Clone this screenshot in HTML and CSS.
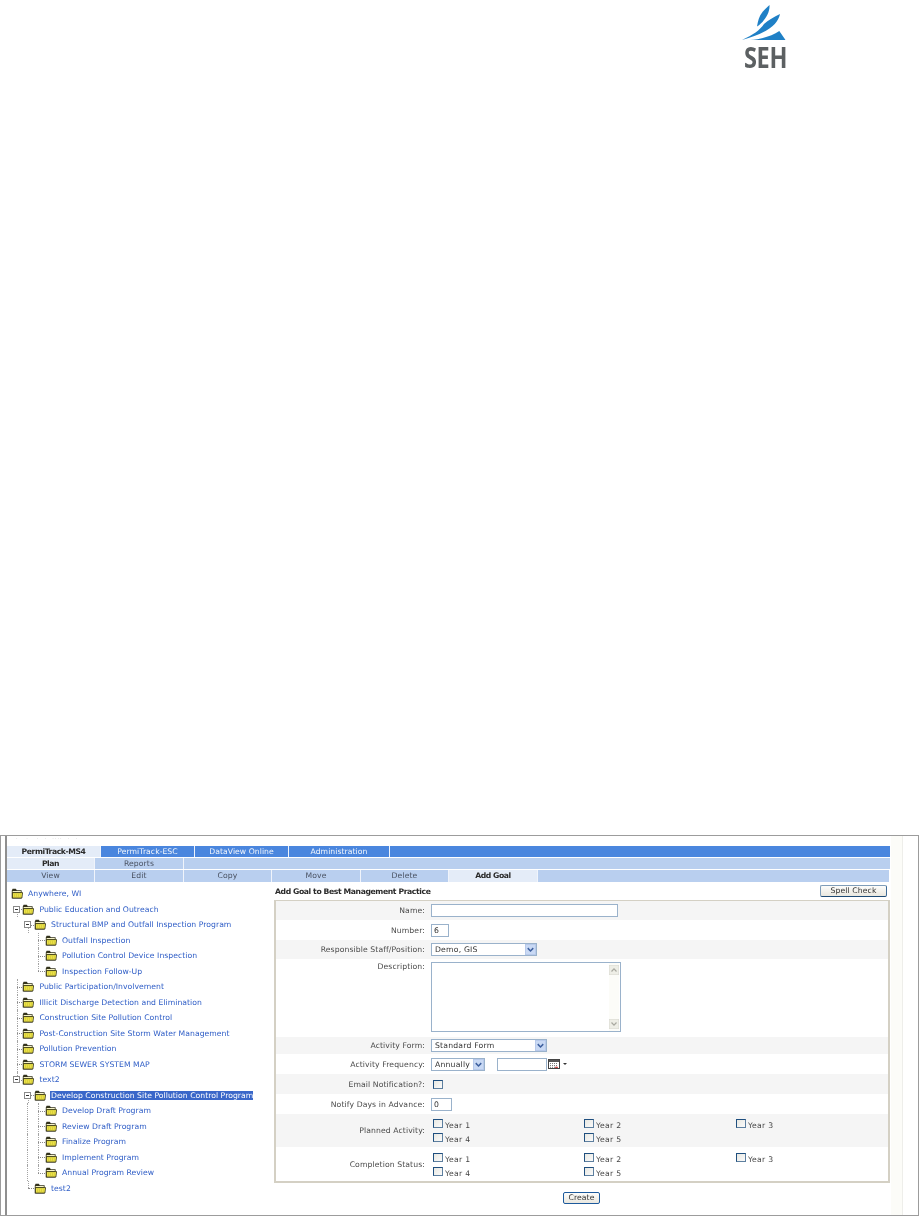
FILE: index.html
```html
<!DOCTYPE html>
<html lang="en">
<head>
<meta charset="utf-8">
<title>PermiTrack-MS4</title>
<link rel="stylesheet" href="styles.css">
</head>
<body>
<svg class="defs" width="0" height="0" aria-hidden="true">
  <symbol id="folder" viewBox="0 0 12 11">
    <path d="M.8 2.4 L1.6 .8 H4.8 L5.8 2.2 H10.6 V10.4 H.8Z" fill="#33321c"/>
    <path d="M1.6 3 H9.8 V4.2 H1.6Z" fill="#f6f3c8"/>
    <path d="M1.4 4.6 H11.6 L10.9 10 H1.4Z" fill="#f5ec4c" stroke="#2d2c16" stroke-width=".8"/>
    <path d="M2.6 6 H10 M3.1 7.1 H9.8 M2.6 8.2 H9.8 M3.1 9.2 H9.6" stroke="#b5aa2c" stroke-width=".7" stroke-dasharray="1 1"/>
  </symbol>
  <symbol id="arrow" viewBox="0 0 12 12">
    <rect x=".5" y=".5" width="11" height="11" fill="#c9d9f4" stroke="#b4c7ea"/>
    <path d="M3 4.5 L6 7.6 L9 4.5" fill="none" stroke="#3d5f9e" stroke-width="1.6"/>
  </symbol>
</svg>

<header class="brand">
  <div class="logo">
    <svg class="logo-mark" width="50" height="42" viewBox="0 0 50 42" aria-hidden="true">
      <path d="M29.5 5 C30 13 25 21 17 26.5 C18 21 19 16 22.5 12 C24.5 9.5 27 7.5 29.5 5Z" fill="#1f80c6"/>
      <path d="M40 14 C38 24 28 33 2 40 C13 35 20 30 24 24 C28 20 34 17 40 14Z" fill="#1f80c6"/>
      <path d="M39.3 31 L45.5 40 H10 C22 39 32 36 39.3 31Z" fill="#1f80c6"/>
    </svg>
    <div class="logo-text">SEH</div>
  </div>
</header>

<main class="frame">
  <div class="inner">
    <div class="app">
      <div class="crumbs">· &nbsp; · &nbsp; · &nbsp;· &nbsp;···· &nbsp;· &nbsp;·</div>
      <nav class="tabs">
        <div class="tabrow primary">
          <a class="tab w94 on">PermiTrack-MS4</a>
          <a class="tab w94">PermiTrack-ESC</a>
          <a class="tab w94">DataView Online</a>
          <a class="tab w101">Administration</a>
        </div>
        <div class="tabrow secondary">
          <a class="tab w88 on">Plan</a>
          <a class="tab w89">Reports</a>
        </div>
        <div class="tabrow tertiary">
          <a class="tab w88">View</a>
          <a class="tab w89">Edit</a>
          <a class="tab w88">Copy</a>
          <a class="tab w89">Move</a>
          <a class="tab w88">Delete</a>
          <a class="tab w89 on">Add Goal</a>
        </div>
      </nav>

      <div class="workspace">
        <aside class="tree">
          <div class="node l0"><svg class="folder"><use href="#folder"/></svg><a class="label">Anywhere, WI</a></div>
          <div class="node l1 first"><span class="guide"><i class="minus"></i></span><svg class="folder"><use href="#folder"/></svg><a class="label">Public Education and Outreach</a></div>
          <div class="node l2 first"><span class="guide"><i class="minus"></i></span><svg class="folder"><use href="#folder"/></svg><a class="label">Structural BMP and Outfall Inspection Program</a></div>
          <div class="node l3"><span class="guide"></span><svg class="folder"><use href="#folder"/></svg><a class="label">Outfall Inspection</a></div>
          <div class="node l3"><span class="guide"></span><svg class="folder"><use href="#folder"/></svg><a class="label">Pollution Control Device Inspection</a></div>
          <div class="node l3 end"><span class="guide"></span><svg class="folder"><use href="#folder"/></svg><a class="label">Inspection Follow-Up</a></div>
          <div class="node l1"><span class="guide"></span><svg class="folder"><use href="#folder"/></svg><a class="label">Public Participation/Involvement</a></div>
          <div class="node l1"><span class="guide"></span><svg class="folder"><use href="#folder"/></svg><a class="label">Illicit Discharge Detection and Elimination</a></div>
          <div class="node l1"><span class="guide"></span><svg class="folder"><use href="#folder"/></svg><a class="label">Construction Site Pollution Control</a></div>
          <div class="node l1"><span class="guide"></span><svg class="folder"><use href="#folder"/></svg><a class="label">Post-Construction Site Storm Water Management</a></div>
          <div class="node l1"><span class="guide"></span><svg class="folder"><use href="#folder"/></svg><a class="label">Pollution Prevention</a></div>
          <div class="node l1"><span class="guide"></span><svg class="folder"><use href="#folder"/></svg><a class="label">STORM SEWER SYSTEM MAP</a></div>
          <div class="node l1 end"><span class="guide"><i class="minus"></i></span><svg class="folder"><use href="#folder"/></svg><a class="label">text2</a></div>
          <div class="node l2 first"><span class="guide"><i class="minus"></i></span><svg class="folder"><use href="#folder"/></svg><a class="label selected">Develop Construction Site Pollution Control Program</a></div>
          <div class="node l3 cont"><span class="guide"></span><svg class="folder"><use href="#folder"/></svg><a class="label">Develop Draft Program</a></div>
          <div class="node l3 cont"><span class="guide"></span><svg class="folder"><use href="#folder"/></svg><a class="label">Review Draft Program</a></div>
          <div class="node l3 cont"><span class="guide"></span><svg class="folder"><use href="#folder"/></svg><a class="label">Finalize Program</a></div>
          <div class="node l3 cont"><span class="guide"></span><svg class="folder"><use href="#folder"/></svg><a class="label">Implement Program</a></div>
          <div class="node l3 cont end"><span class="guide"></span><svg class="folder"><use href="#folder"/></svg><a class="label">Annual Program Review</a></div>
          <div class="node l2 end"><span class="guide"></span><svg class="folder"><use href="#folder"/></svg><a class="label">test2</a></div>
        </aside>

        <section class="content">
          <div class="headbar">
            <h1 class="title">Add Goal to Best Management Practice</h1>
            <button class="btn spell" type="button">Spell Check</button>
          </div>
          <form class="panel">
            <div class="row h19 alt"><label class="cap">Name:</label><div class="field"><input class="input name" type="text"></div></div>
            <div class="row h20"><label class="cap">Number:</label><div class="field"><input class="input number" type="text" value="6"></div></div>
            <div class="row h19 alt"><label class="cap">Responsible Staff/Position:</label><div class="field"><div class="select s106"><span class="sel-text">Demo, GIS</span><svg class="sel-arrow"><use href="#arrow"/></svg></div></div></div>
            <div class="row desc"><label class="cap top">Description:</label>
              <div class="field top">
                <div class="textarea"><div class="ta-body"></div>
                  <div class="scroll">
                    <svg class="sb" viewBox="0 0 10 10"><rect width="10" height="10" fill="#eeeee6" stroke="#d8d8d0"/><path d="M2.5 6.5 L5 3.8 L7.5 6.5" fill="none" stroke="#a9a9a0" stroke-width="1.2"/></svg>
                    <svg class="sb" viewBox="0 0 10 10"><rect width="10" height="10" fill="#eeeee6" stroke="#d8d8d0"/><path d="M2.5 3.5 L5 6.2 L7.5 3.5" fill="none" stroke="#a9a9a0" stroke-width="1.2"/></svg>
                  </div>
                </div>
              </div>
            </div>
            <div class="row h17 alt"><label class="cap">Activity Form:</label><div class="field"><div class="select s116"><span class="sel-text">Standard Form</span><svg class="sel-arrow"><use href="#arrow"/></svg></div></div></div>
            <div class="row h20"><label class="cap">Activity Frequency:</label>
              <div class="field">
                <div class="select s54"><span class="sel-text">Annually</span><svg class="sel-arrow"><use href="#arrow"/></svg></div>
                <input class="input date" type="text">
                <svg class="cal" width="12" height="10" viewBox="0 0 12 10" aria-hidden="true">
                  <rect x=".5" y=".5" width="11" height="9" fill="#fff" stroke="#444"/>
                  <rect x="1" y="1" width="10" height="2" fill="#555"/>
                  <path d="M2 4.5 H10 M2 6.5 H10 M2 8.3 H10" stroke="#7a7a7a" stroke-dasharray="1 1"/>
                  <path d="M7 8.3 H10" stroke="#c33"/>
                </svg>
                <span class="caret"></span>
              </div>
            </div>
            <div class="row h20 alt"><label class="cap">Email Notification?:</label><div class="field"><input class="check email" type="checkbox"></div></div>
            <div class="row h20"><label class="cap">Notify Days in Advance:</label><div class="field"><input class="input days" type="text" value="0"></div></div>
            <div class="row h33 alt"><label class="cap">Planned Activity:</label>
              <div class="years">
                <label class="year"><input class="check" type="checkbox"><span class="year-text">Year 1</span></label>
                <label class="year"><input class="check" type="checkbox"><span class="year-text">Year 2</span></label>
                <label class="year"><input class="check" type="checkbox"><span class="year-text">Year 3</span></label>
                <label class="year"><input class="check" type="checkbox"><span class="year-text">Year 4</span></label>
                <label class="year"><input class="check" type="checkbox"><span class="year-text">Year 5</span></label>
              </div>
            </div>
            <div class="row h35"><label class="cap">Completion Status:</label>
              <div class="years">
                <label class="year"><input class="check" type="checkbox"><span class="year-text">Year 1</span></label>
                <label class="year"><input class="check" type="checkbox"><span class="year-text">Year 2</span></label>
                <label class="year"><input class="check" type="checkbox"><span class="year-text">Year 3</span></label>
                <label class="year"><input class="check" type="checkbox"><span class="year-text">Year 4</span></label>
                <label class="year"><input class="check" type="checkbox"><span class="year-text">Year 5</span></label>
              </div>
            </div>
          </form>
          <div class="actions"><button class="btn create" type="button">Create</button></div>
        </section>
      </div>
    </div>
    <div class="strip"></div>
  </div>
</main>
</body>
</html>
```
FILE: styles.css
```css
* { box-sizing: border-box; }
html, body { margin: 0; padding: 0; background: #fff; }
body { width: 919px; height: 1216px; overflow: hidden; font-family: "DejaVu Sans", sans-serif; font-size: 7.7px; color: #333; }
.defs { display: block; height: 0; }

/* brand */
.brand { height: 835px; padding: 0 0 0 740px; }
.logo { width: 50px; }
.logo-mark { display: block; }
.logo-text { font-family: "Open Sans", sans-serif; font-weight: 700; font-size: 28px; line-height: 24px; color: #5c6062; margin: 3px 0 0 4px; letter-spacing: -.4px; transform: scaleX(.84); transform-origin: left center; }

/* frame */
.frame { height: 381px; border: 1px solid #9c9c9c; padding-left: 4px; }
.inner { height: 100%; display: flex; border-left: 2px solid #8f8f8f; }
.app { width: 883px; flex: none; filter: blur(.3px); }
.strip { width: 12px; height: 100%; background: #fcfcf8; border-right: 1px solid #eeeeea; margin-left: 1px; }

.crumbs { height: 10px; font-size: 5px; line-height: 5px; color: #bbb; padding-left: 9px; letter-spacing: 1px; }

/* tabs */
.tabs { display: flex; flex-direction: column; gap: 1px; }
.tabrow { display: flex; height: 11px; }
.primary { background: #4a86de; }
.secondary { background: #b9cfef; }
.tertiary { background: #b9cfef; height: 12px; width: 882px; }
.tab { display: block; text-align: center; line-height: 11px; border-right: 1px solid #f0f4fb; letter-spacing: .05px; }
.primary .tab { color: #f2f6fd; }
.secondary .tab, .tertiary .tab { color: #4a5262; letter-spacing: .1px; }
.tab.on, .secondary .tab.on, .tertiary .tab.on { background: #e4ecf8; color: #2a2a2a; font-weight: 700; letter-spacing: -.45px; }
.w88 { width: 88px; }
.w89 { width: 89px; }
.w94 { width: 94px; }
.w101 { width: 101px; }

/* workspace */
.workspace { display: flex; }
.tree { width: 267px; flex: none; padding-top: 4px; }
.node { position: relative; height: 15.5px; display: flex; align-items: center; white-space: nowrap; }
.l0 { padding-left: 4px; }
.l1 { padding-left: 10px; }
.l2 { padding-left: 21px; }
.l3 { padding-left: 31px; }
.guide { position: relative; flex: none; align-self: stretch; }
.l1 .guide { width: 5.4px; }
.l2 .guide { width: 6px; }
.l3 .guide { width: 7px; }
.guide::before { content: ""; position: absolute; left: 0; top: 0; bottom: 0; border-left: 1px dotted #a4a4a4; }
.guide::after { content: ""; position: absolute; left: 0; right: 0; top: 50%; border-top: 1px dotted #8a8a8a; }
.end .guide::before { bottom: 50%; }
.first .guide::before { top: 50%; }
.cont::before { content: ""; position: absolute; left: 20px; top: 0; bottom: 0; border-left: 1px dotted #a4a4a4; }
.minus { position: absolute; left: -4px; top: 4px; width: 7px; height: 7px; z-index: 1; background: #fff; border: 1px solid #8a8a8a; }
.minus::after { content: ""; position: absolute; left: 1px; right: 1px; top: 2px; height: 1px; background: #333; }
.folder { width: 12px; height: 11px; flex: none; }
.label { margin-left: 5px; color: #2d5cc6; letter-spacing: .03px; line-height: 9px; }
.label.selected { background: #3a67c9; color: #fff; margin-left: 4px; padding: 0 0 0 1px; }

/* content */
.content { flex: 1; min-width: 0; }
.headbar { height: 18px; display: flex; align-items: center; justify-content: space-between; padding-right: 3px; padding-left: 1px; }
.title { margin: 0; font-size: 7.7px; font-weight: 700; color: #2a2a2a; letter-spacing: -.4px; }
.btn { font: inherit; color: #333; background: linear-gradient(#fdfdfb, #e9e7df); border: 1px solid #7f9db9; border-bottom-color: #1d4a75; border-right-color: #3d6a96; border-radius: 2px; padding: 0; letter-spacing: .1px; }
.spell { width: 67px; height: 12px; line-height: 10px; }
.panel { width: 616px; height: 283px; border: 1px solid #d4d0c4; border-left-width: 2px; border-bottom-width: 2px; border-right-width: 2px; }

.row { display: grid; grid-template-columns: 149px 1fr; column-gap: 6px; align-items: center; }
.h17 { height: 17px; }
.h19 { height: 19px; }
.h20 { height: 20px; }
.h33 { height: 33px; }
.h35 { height: 35px; }
.desc { height: 78px; }
.alt { background: #f5f5f5; }
.cap { text-align: right; color: #4a4a4a; letter-spacing: .1px; }
.cap.top { align-self: start; padding-top: 3px; }
.field { display: flex; align-items: center; }
.field.top { align-self: start; padding-top: 3px; }

.input { font: inherit; color: #333; height: 13px; padding: 0 2px; border: 1px solid #9ab2cb; background: #fff; border-radius: 0; outline: 0; }
.name { width: 187px; }
.number { width: 18px; }
.days { width: 21px; }
.date { width: 50px; margin-left: 12px; }

.select { display: flex; align-items: center; justify-content: space-between; height: 13px; border: 1px solid #9ab2cb; background: #fff; padding-left: 3px; color: #333; letter-spacing: .2px; }
.s106 { width: 106px; }
.s116 { width: 116px; }
.s54 { width: 54px; }
.sel-arrow { width: 11px; height: 11px; flex: none; }

.cal { margin-left: 1px; }
.caret { width: 0; height: 0; margin-left: 3px; border: 2px solid transparent; border-top: 2px solid #333; border-bottom: 0; }

.textarea { width: 190px; height: 70px; display: flex; border: 1px solid #9ab2cb; background: #fff; }
.ta-body { flex: 1; }
.scroll { width: 10px; margin-right: 1px; display: flex; flex-direction: column; justify-content: space-between; padding: 2px 0; background: #fcfcf8; }
.sb { display: block; width: 10px; height: 10px; }

.check { appearance: none; -webkit-appearance: none; flex: none; margin: 0; width: 10px; height: 9px; border: 1px solid #5d7f9f; border-top-color: #1f4f7f; border-left-color: #1f4f7f; background: linear-gradient(135deg, #e8e8e2, #fafafa); }
.email { margin-left: 2px; }

.years { display: grid; grid-template-columns: 151px 152px 1fr; row-gap: 5px; padding-left: 2px; }
.year { display: flex; align-items: center; gap: 2px; color: #444; letter-spacing: .3px; height: 9px; }
.year-text { margin-top: 3px; }

.actions { display: flex; padding: 9px 0 0 289px; }
.create { width: 37px; height: 12px; line-height: 10px; border-color: #1d5a9c; }
```
